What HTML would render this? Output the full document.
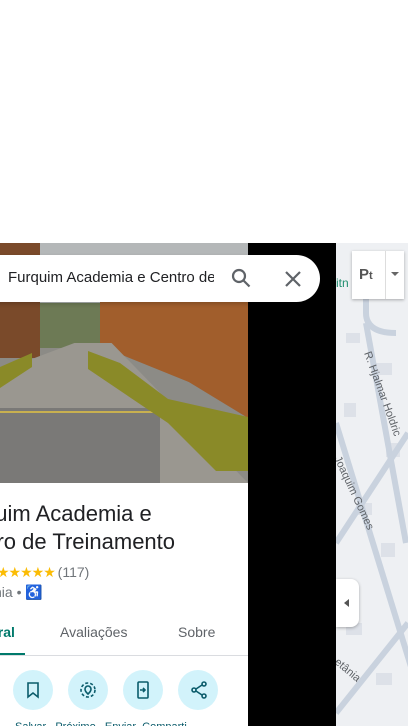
<!DOCTYPE html>
<html><head><meta charset="utf-8"><style>
body{margin:0;width:408px;height:726px;overflow:hidden;background:#fff;font-family:"Liberation Sans",sans-serif;position:relative}
.a{position:absolute}
</style></head><body>
<div class="a" style="left:0;top:243px;width:248px;height:483px;background:#fff;overflow:hidden">
 <div class="a" style="left:0;top:0;width:248px;height:240px;background:#8c8b86"></div>
 <div class="a" style="left:0;top:0;width:248px;height:70px;background:#b4b7b8"></div>
 <div class="a" style="left:40px;top:60px;width:60px;height:45px;background:#6d7a55"></div>
 <div class="a" style="left:0;top:0;width:40px;height:115px;background:#7a4a2a"></div>
 <div class="a" style="left:100px;top:55px;width:148px;height:120px;background:#a15e2c;clip-path:polygon(0 0,100% 0,100% 100%,60% 70%,0 40%)"></div>
 <div class="a" style="left:0;top:100px;width:248px;height:140px;background:#9a9790;clip-path:polygon(30% 0,45% 0,100% 100%,0 100%,0 20%)"></div>
 <div class="a" style="left:0;top:165px;width:160px;height:75px;background:#7a7977"></div>
 <div class="a" style="left:0;top:168px;width:160px;height:2px;background:#c8b050"></div>
 <div class="a" style="left:88px;top:108px;width:160px;height:120px;background:#8a8a28;clip-path:polygon(0 0,20% 10%,50% 40%,100% 55%,100% 100%,80% 100%,50% 60%,0 15%)"></div>
 <div class="a" style="left:0;top:110px;width:32px;height:35px;background:#8a8a28;clip-path:polygon(100% 0,100% 40%,0 100%,0 40%)"></div>
 <div class="a" style="left:0;top:240px;width:248px;height:243px;background:#fff"></div>
 <div class="a" style="left:-50px;top:257px;font-size:22px;color:#202124;line-height:28px;white-space:nowrap">Furquim Academia e<br>Centro de Treinamento</div>
 <div class="a" style="left:-3px;top:321px;font-size:14px;color:#fbbc04;letter-spacing:-1px;white-space:nowrap">★★★★★ <span style="color:#70757a;letter-spacing:0">(117)</span></div>
 <div class="a" style="left:-6px;top:341px;font-size:14px;color:#70757a;white-space:nowrap">nia • <span style="color:#1a73e8">♿</span></div>
 <div class="a" style="left:-10px;top:381px;font-size:14px;color:#00796b;font-weight:bold">eral</div>
 <div class="a" style="left:60px;top:381px;font-size:14px;color:#5f6368">Avaliações</div>
 <div class="a" style="left:178px;top:381px;font-size:14px;color:#5f6368">Sobre</div>
 <div class="a" style="left:0;top:410px;width:25px;height:3px;background:#00796b"></div>
 <div class="a" style="left:0;top:412px;width:248px;height:1px;background:#dadce0"></div>
 <div class="a" style="left:13px;top:427px;width:40px;height:40px;border-radius:50%;background:#d2f3fb"></div>
 <div class="a" style="left:68px;top:427px;width:40px;height:40px;border-radius:50%;background:#d2f3fb"></div>
 <div class="a" style="left:123px;top:427px;width:40px;height:40px;border-radius:50%;background:#d2f3fb"></div>
 <div class="a" style="left:178px;top:427px;width:40px;height:40px;border-radius:50%;background:#d2f3fb"></div>
 <svg class="a" style="left:13px;top:427px" width="205" height="40" fill="none" stroke="#0b5c6b" stroke-width="1.6">
  <path d="M15 13h10v14l-5-4-5 4z"/>
  <circle cx="75" cy="20" r="7" stroke-dasharray="3 2"/><path d="M75 24c-2-2-3-3-3-5a3 3 0 0 1 6 0c0 2-1 3-3 5z"/>
  <rect x="125" y="12" width="10" height="16" rx="1"/><path d="M127 20h5m-2-2 2 2-2 2"/>
  <circle cx="191" cy="14" r="2"/><circle cx="181" cy="20" r="2"/><circle cx="191" cy="26" r="2"/><path d="M183 19l6-4m-6 6 6 4"/>
 </svg>
 <div class="a" style="left:15px;top:478px;font-size:11px;color:#0b5c6b;white-space:nowrap">Salvar &nbsp; Próximo &nbsp; Enviar &nbsp;Comparti</div>
</div>
<div class="a" style="left:248px;top:243px;width:88px;height:483px;background:#000"></div>
<div class="a" style="left:336px;top:243px;width:72px;height:483px;background:#eef0f3;overflow:hidden">
 <svg width="72" height="483" style="position:absolute;left:0;top:0">
  <g fill="#dde1e8"><rect x="10" y="90" width="14" height="10"/><rect x="40" y="120" width="16" height="12"/><rect x="8" y="160" width="12" height="14"/><rect x="50" y="200" width="14" height="14"/><rect x="20" y="260" width="16" height="12"/><rect x="45" y="300" width="14" height="14"/><rect x="10" y="380" width="16" height="12"/><rect x="40" y="430" width="16" height="12"/></g>
  <g stroke="#c9d2de" stroke-width="6" fill="none"><path d="M30 30v40q0 20 30 20"/><path d="M30 80l40 220"/><path d="M0 180l80 260"/><path d="M0 300l72-110"/><path d="M0 470l72-90"/></g>
  <text x="28" y="110" font-size="11" fill="#5f6368" transform="rotate(70 28 110)">R. Hjalmar Holdric</text>
  <text x="-2" y="215" font-size="11" fill="#5f6368" transform="rotate(65 -2 215)">Joaquim Gomes</text>
  <text x="-2" y="420" font-size="11" fill="#5f6368" transform="rotate(40 -2 420)">etânia</text>
  <text x="0" y="44" font-size="12" fill="#1e8e6e">itn</text>
 </svg>
 <div class="a" style="left:16px;top:8px;width:52px;height:48px;background:#fff;box-shadow:0 1px 3px rgba(0,0,0,.3)"></div>
 <div class="a" style="left:23px;top:23px;font-size:15px;font-weight:bold;color:#555">P<span style="font-size:11px">t</span></div>
 <div class="a" style="left:49px;top:8px;width:1px;height:48px;background:#ddd"></div>
 <div class="a" style="left:55px;top:29px;border:4px solid transparent;border-top-color:#666;border-bottom:0"></div>
 <div class="a" style="left:0;top:336px;width:23px;height:48px;background:#fff;border-radius:0 8px 8px 0;box-shadow:0 1px 3px rgba(0,0,0,.3)"></div>
 <div class="a" style="left:8px;top:356px;border:4px solid transparent;border-right:5px solid #555;border-left:0"></div>
</div>
<div class="a" style="left:-30px;top:255px;width:350px;height:47px;background:#fff;border-radius:24px;box-shadow:0 2px 4px rgba(0,0,0,.2)"></div>
<div class="a" style="left:8px;top:269px;width:206px;overflow:hidden;white-space:nowrap;font-size:15px;color:#202124">Furquim Academia e Centro de Treinamento</div>
<svg class="a" style="left:230px;top:267px" width="24" height="24" fill="none" stroke="#5f6368" stroke-width="2.2"><circle cx="9" cy="9" r="6"/><path d="M13.5 13.5l6 6"/></svg>
<svg class="a" style="left:284px;top:270px" width="18" height="18" stroke="#5f6368" stroke-width="2.2"><path d="M2 2l14 14M16 2L2 16"/></svg>
</body></html>
